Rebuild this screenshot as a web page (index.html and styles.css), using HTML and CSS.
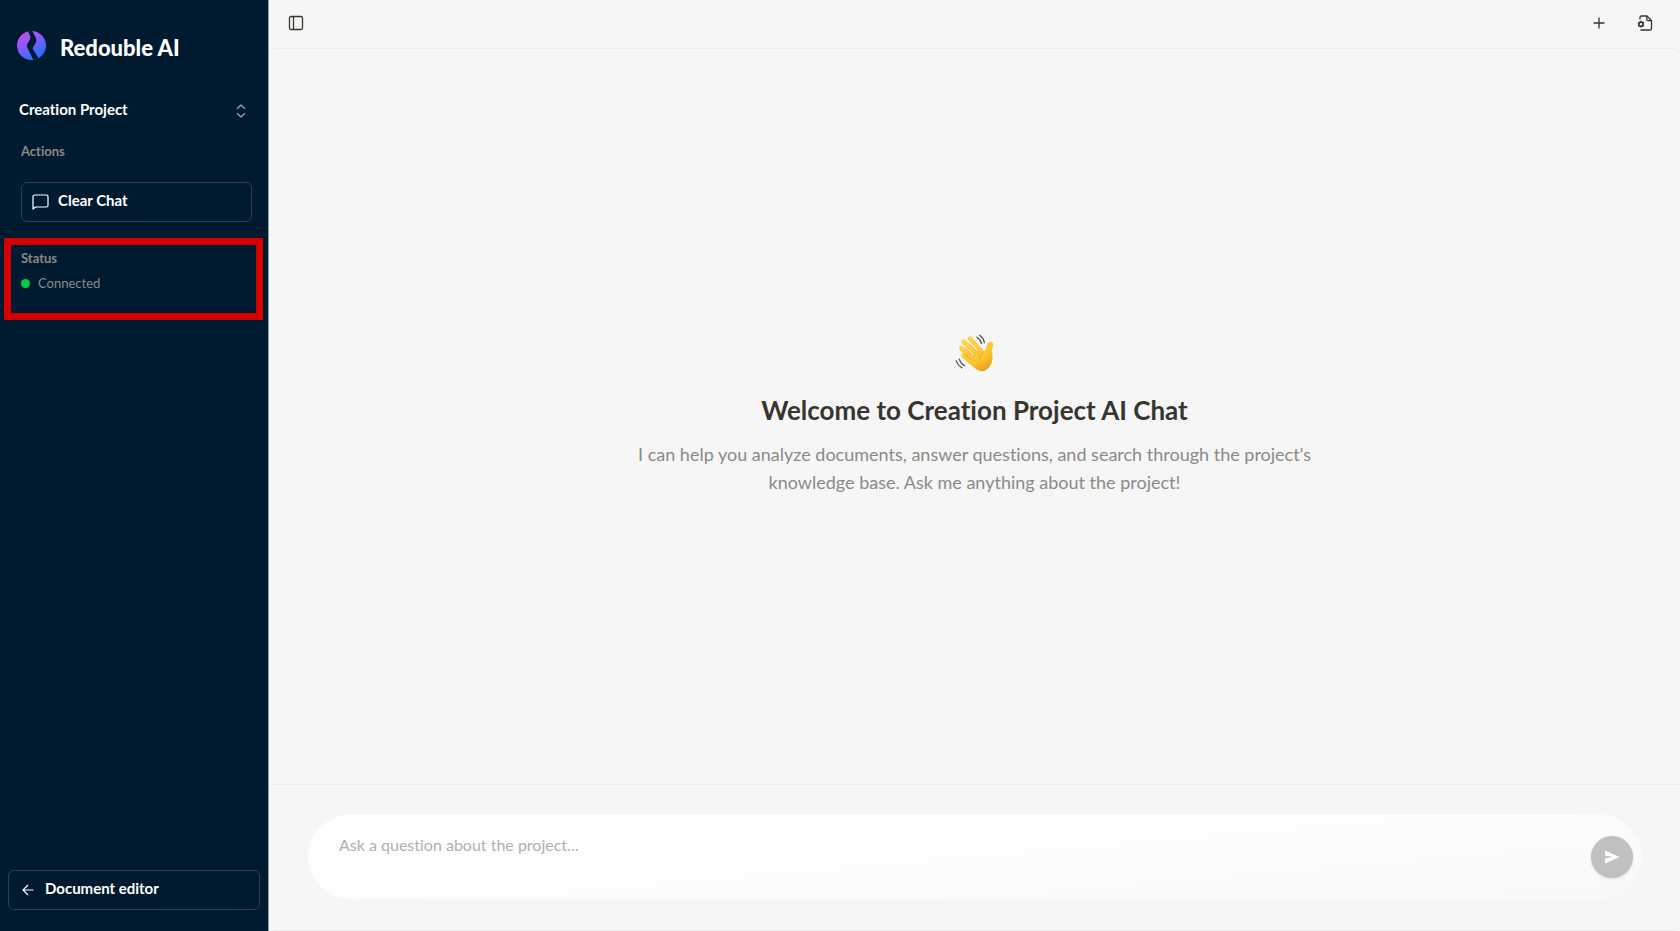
FILE: index.html
```html
<!DOCTYPE html>
<html lang="en">
<head>
<meta charset="UTF-8" />
<meta name="viewport" content="width=device-width, initial-scale=1" />
<title>Redouble AI</title>
<link rel="stylesheet" href="styles.css">
</head>
<body>

  <aside class="sidebar">
    <a class="brand" href="#">
      <svg class="brand-logo" viewBox="0 0 29 29" aria-hidden="true">
        <defs>
          <linearGradient id="logo-fill" x1="0.15" y1="0.1" x2="0.7" y2="0.95">
            <stop offset="0" stop-color="#c04df0" />
            <stop offset="0.5" stop-color="#7a5cff" />
            <stop offset="1" stop-color="#1f72ff" />
          </linearGradient>
          <clipPath id="logo-clip"><circle cx="14.5" cy="14.5" r="14.5" /></clipPath>
        </defs>
        <g clip-path="url(#logo-clip)">
          <rect width="29" height="29" fill="url(#logo-fill)" />
          <path d="M10.5 -1 L12.8 4 Q14.4 7.6 11.8 10.4 Q8.8 13.4 10.6 17 L16.8 30 L22.4 28.5 L16 18.6 Q15.2 17 16.8 15 Q20.6 10.8 18.6 6.4 L14.8 -1 Z" fill="#001a2f" />
        </g>
      </svg>
      <span class="brand-name">Redouble AI</span>
    </a>

    <button class="project-switch" type="button">
      <span>Creation Project</span>
      <svg class="icon-chevrons" viewBox="0 0 10 14" aria-hidden="true">
        <path d="M1 4.8 L5 1 L9 4.8 M1 9.2 L5 13 L9 9.2" />
      </svg>
    </button>

    <section class="actions">
      <h2 class="section-title">Actions</h2>
      <button class="side-button" type="button">
        <svg class="icon-chat" viewBox="0 0 17 16" aria-hidden="true">
          <path d="M1 15 V2.5 Q1 1 2.5 1 H14.5 Q16 1 16 2.5 V11.5 Q16 13 14.5 13 H3.5 Z" />
        </svg>
        <span>Clear Chat</span>
      </button>
    </section>

    <section class="status">
      <h2 class="section-title">Status</h2>
      <p class="status-line"><span class="status-dot"></span>Connected</p>
    </section>

    <a class="side-button back-link" href="#">
      <svg class="icon-back" viewBox="0 0 12 12" aria-hidden="true">
        <path d="M11.5 6 H1 M6 1 L1 6 L6 11" />
      </svg>
      <span>Document editor</span>
    </a>
  </aside>

  <main class="main">
    <header class="topbar">
      <button class="icon-button" type="button" aria-label="Toggle sidebar">
        <svg viewBox="0 0 16 16" aria-hidden="true">
          <rect x="1.5" y="1.5" width="13" height="13" rx="1.5" />
          <path d="M5.5 1.5 V14.5" />
        </svg>
      </button>
      <div class="topbar-tools">
        <button class="icon-button" type="button" aria-label="New chat">
          <svg viewBox="0 0 16 16" aria-hidden="true">
            <path d="M8 2.5 V13.5 M2.5 8 H13.5" />
          </svg>
        </button>
        <button class="icon-button" type="button" aria-label="Document settings">
          <svg viewBox="0 0 16 16" aria-hidden="true">
            <path d="M3 4.5 V2.5 Q3 1 4.5 1 H10 L14.5 5.5 V13.5 Q14.5 15 13 15 H3.5" />
            <path d="M9.8 1.2 V4.3 Q9.8 5.7 11.2 5.7 H14.2" />
            <circle cx="4" cy="9.2" r="2.1" stroke-width="1.6" />
            <path d="M4 5.8 V7 M4 11.4 V12.6 M1.1 7.5 L2.1 8.1 M5.9 10.3 L6.9 10.9 M1.1 10.9 L2.1 10.3 M5.9 8.1 L6.9 7.5" />
          </svg>
        </button>
      </div>
    </header>

    <div class="panel">
      <section class="welcome">
        <svg class="wave" viewBox="0 0 40 40" role="img" aria-label="Waving hand">
          <defs>
            <linearGradient id="skin" gradientUnits="userSpaceOnUse" x1="10" y1="4" x2="30" y2="38">
              <stop offset="0" stop-color="#ffd54a" />
              <stop offset="0.65" stop-color="#fcc331" />
              <stop offset="1" stop-color="#e99a1c" />
            </linearGradient>
          </defs>
          <g stroke="url(#skin)" stroke-linecap="round" fill="none">
            <path d="M8.4 21.6 L16 28.5" stroke-width="4.4" />
            <path d="M6.4 14.4 L18 25.4" stroke-width="4.8" />
            <path d="M8.4 7.6 L22 21" stroke-width="4.8" />
            <path d="M15 4.4 L26 17" stroke-width="4.6" />
          </g>
          <path d="M13 27 L25.5 13.8 L28.6 17.6 Q30.8 16.4 31.2 13.4 Q32 8.2 35.6 7.8 Q39.2 8 38 11.6 Q36.6 15.4 37.4 20 Q38.4 28 34.4 33 Q28.4 39.8 21.6 35.6 Q17.6 32.8 12.4 27.4 Z" fill="url(#skin)" />
          <g stroke="#e39a1d" stroke-width="0.8" stroke-linecap="round" fill="none">
            <path d="M10.6 20.6 L16 25.8" />
            <path d="M10 14.2 L19 22.6" />
            <path d="M14 9.6 L22.2 18.2" />
            <path d="M28.8 17.8 Q24.6 20.2 24.6 25" />
          </g>
          <g stroke="#55585c" stroke-width="1.3" stroke-linecap="round" fill="none">
            <path d="M21.8 3.2 Q25.4 5.2 26.6 9.6" />
            <path d="M24.8 1.2 Q28.6 4 29.4 8.6" />
            <path d="M4.2 25.2 Q5.8 29.6 9.6 31.6" />
            <path d="M1.2 26.6 Q3 31.8 7 33.8" />
          </g>
        </svg>
        <h1 class="welcome-title">Welcome to Creation Project AI Chat</h1>
        <p class="welcome-text">I can help you analyze documents, answer questions, and search through the project's knowledge base. Ask me anything about the project!</p>
      </section>

      <footer class="composer">
        <form class="prompt">
          <textarea class="prompt-input" rows="2" aria-label="Question" placeholder="Ask a question about the project..."></textarea>
          <button class="send" type="button" aria-label="Send">
            <svg viewBox="0 0 16 14" aria-hidden="true">
              <path d="M1 0.5 L15.5 7 L1 13.5 V8.6 L9.5 7 L1 5.4 Z" />
            </svg>
          </button>
        </form>
      </footer>
    </div>
  </main>

</body>
</html>
```

FILE: styles.css
```css
* {
  box-sizing: border-box;
}

body {
  margin: 0;
  display: flex;
  min-height: 100vh;
  background: #f6f6f6;
  color: #37352f;
  font-family: Lato, 'Open Sans', sans-serif;
  font-variant-ligatures: none;
}

button,
textarea {
  font-family: inherit;
  font-variant-ligatures: inherit;
}

button {
  cursor: pointer;
}

h1,
h2,
p {
  margin: 0;
}

svg {
  display: block;
  flex-shrink: 0;
}

/* Sidebar */

.sidebar {
  display: flex;
  flex-direction: column;
  width: 269px;
  flex-shrink: 0;
  padding: 31px 0 21px;
  background: #001a2f;
  border-right: 1px solid #8d99a4;
  color: #fff;
}

.brand {
  display: flex;
  align-items: flex-start;
  gap: 14px;
  padding: 0 17px;
  color: #fff;
  text-decoration: none;
}

.brand-logo {
  width: 29px;
  height: 29px;
}

.brand-name {
  padding-top: 3px;
  font-size: 22px;
  line-height: 28px;
  font-weight: 900;
}

.project-switch {
  display: flex;
  align-items: center;
  justify-content: space-between;
  margin-top: 31px;
  padding: 4px 22px 4px 19px;
  border: none;
  background: none;
  color: #fff;
  font-size: 15px;
  line-height: 24px;
  font-weight: 700;
}

.project-switch span,
.side-button span {
  padding-bottom: 4px;
}

.icon-chevrons {
  width: 10px;
  height: 14px;
  fill: none;
  stroke: #a5aeb6;
  stroke-width: 1.2;
}

.actions {
  margin-top: 12px;
  padding: 0 16px 0 21px;
}

.section-title {
  color: #8a8a87;
  font-size: 13px;
  line-height: 20px;
  font-weight: 700;
}

.side-button {
  display: flex;
  align-items: center;
  width: 100%;
  height: 40px;
  padding: 0 10px;
  gap: 9px;
  border: 1px solid #2b4052;
  border-radius: 6px;
  background: none;
  color: #fff;
  font-size: 15px;
  line-height: 24px;
  font-weight: 700;
  text-decoration: none;
}

.actions .side-button {
  margin-top: 21px;
}

.icon-chat {
  width: 17px;
  height: 16px;
  fill: none;
  stroke: #fff;
  stroke-width: 1.2;
  stroke-linejoin: round;
}

.status {
  height: 82px;
  margin: 16px 5px 0 4px;
  padding: 3px 10px;
  border: 7px solid #d40004;
}

.status-line {
  display: flex;
  align-items: center;
  gap: 8px;
  margin-top: 5px;
  color: #8a8a87;
  font-size: 13px;
  line-height: 20px;
}

.status-dot {
  width: 9px;
  height: 9px;
  border-radius: 50%;
  background: #00c950;
}

.back-link {
  width: auto;
  margin: auto 8px 0;
  padding: 0 13px;
  gap: 11px;
}

.icon-back {
  width: 12px;
  height: 12px;
  fill: none;
  stroke: #fff;
  stroke-width: 1.2;
}

/* Main area */

.main {
  display: flex;
  flex-direction: column;
  flex: 1;
  min-width: 0;
}

.topbar {
  display: flex;
  align-items: center;
  justify-content: space-between;
  height: 48px;
  padding: 0 23px 3px 15px;
}

.topbar-tools {
  display: flex;
  gap: 22px;
}

.icon-button {
  display: flex;
  align-items: center;
  justify-content: center;
  width: 24px;
  height: 24px;
  padding: 0;
  border: none;
  background: none;
}

.icon-button svg {
  width: 16px;
  height: 16px;
  fill: none;
  stroke: #37352f;
  stroke-width: 1.3;
}

.panel {
  display: flex;
  flex-direction: column;
  flex: 1;
  border: 1px solid #ececec;
  border-width: 1px 0;
  border-radius: 6px;
}

.welcome {
  display: flex;
  flex-direction: column;
  align-items: center;
  justify-content: center;
  flex: 1;
  padding: 0 24px 4px;
  text-align: center;
}

.wave {
  width: 40px;
  height: 40px;
}

.welcome-title {
  margin-top: 18px;
  font-size: 26px;
  line-height: 36px;
  font-weight: 700;
}

.welcome-text {
  max-width: 680px;
  margin-top: 12px;
  color: #8a8a87;
  font-size: 18px;
  line-height: 28px;
}

/* Composer */

.composer {
  padding: 30px 38px 31px 39px;
  border-top: 1px solid #ececec;
}

.prompt {
  display: flex;
  align-items: center;
  gap: 16px;
  padding: 16px 9px 16px 31px;
  border-radius: 42px;
  background: linear-gradient(175deg, #fff 0%, #fdfdfd 50%, #f8f8f8 100%);
  box-shadow: 0 0 2px rgba(255, 255, 255, 0.8);
}

.prompt-input {
  flex: 1;
  height: 52px;
  padding: 0;
  border: none;
  outline: none;
  resize: none;
  background: transparent;
  color: #37352f;
  font-size: 16px;
  line-height: 28px;
}

.prompt-input::placeholder {
  color: #b0b0ae;
  opacity: 1;
}

.send {
  display: flex;
  align-items: center;
  justify-content: center;
  width: 42px;
  height: 42px;
  padding: 0;
  border: none;
  border-radius: 50%;
  background: #c0c0c0;
  box-shadow: 0 1px 3px rgba(0, 0, 0, 0.12);
}

.send svg {
  width: 16px;
  height: 14px;
  fill: #fff;
}
```
